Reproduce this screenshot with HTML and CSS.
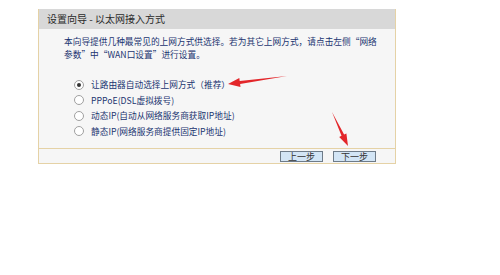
FILE: index.html
```
<html lang="zh-CN"><head>
    <meta charset="UTF-8">
    <title>设置向导 - 以太网接入方式</title>
    <link rel="stylesheet" href="styles.css">
</head>
<body>
    <div class="panel">
        <div class="panel-header">设置向导 - 以太网接入方式</div>
        <div class="panel-body">
            <p class="intro">本向导提供几种最常见的上网方式供选择。若为其它上网方式，请点击左侧“网络参数”中“WAN口设置”进行设置。</p>
            <div class="options">
                <div class="option"><span class="radio checked"></span>让路由器自动选择上网方式（推荐）</div>
                <div class="option"><span class="radio"></span>PPPoE(DSL虚拟拨号)</div>
                <div class="option"><span class="radio"></span>动态IP(自动从网络服务商获取IP地址)</div>
                <div class="option"><span class="radio"></span>静态IP(网络服务商提供固定IP地址)</div>
            </div>
        </div>
        <div class="panel-footer">
            <button class="step-btn">上一步</button>
            <button class="step-btn">下一步</button>
        </div>
    </div>

    <svg class="marks" width="500" height="275" viewBox="0 0 500 275">
        <path d="M287 76 L239.7 80.9 L239.3 77.9 L228 84 L240.5 86.9 L240.1 83.9 Z" fill="#e3262a"/>
        <path d="M332 112 L344.1 134.6 L346.4 133.5 L348 146 L339.2 136.9 L341.5 135.8 Z" fill="#e3262a"/>
    </svg>
</body></html>
```

FILE: styles.css
```
body {
    margin: 0;
    padding: 9px 0 0 38px;
    background-color: #fff;
    font-family: "Noto Sans CJK SC", "Liberation Sans", sans-serif;
}
.panel {
    width: 358px;
    box-sizing: border-box;
    border: 1px solid #e5d2a6;
    border-top: none;
}
.panel-header {
    height: 20px;
    line-height: 20px;
    padding-left: 8px;
    background-color: #d8d8d8;
    color: #2a2a2a;
    font-size: 10px;
}
.panel-body {
    height: 119px;
    box-sizing: border-box;
    padding: 6px 12px 0 25px;
    background-color: #f6f6f6;
    color: #1a3470;
    font-size: 8.7px;
}
.intro {
    margin: 0;
    line-height: 13px;
}
.options {
    margin-top: 16px;
}
.option {
    display: flex;
    align-items: center;
    line-height: 15.5px;
    padding-left: 10px;
}
.radio {
    width: 8px;
    height: 8px;
    margin-right: 7px;
    border: 1px solid #a0a0a0;
    border-radius: 50%;
    background-color: #fff;
    display: flex;
    justify-content: center;
    align-items: center;
}
.radio.checked::after {
    content: "";
    width: 4px;
    height: 4px;
    border-radius: 50%;
    background-color: #333;
}
.panel-footer {
    height: 15px;
    box-sizing: border-box;
    border-top: 1px solid #e5d2a6;
    background-color: #f6f6f6;
    display: flex;
    justify-content: flex-end;
    gap: 10px;
    padding: 2px 19px 0 0;
}
.step-btn {
    width: 43px;
    height: 11px;
    padding: 0;
    border: 1px solid #6e7b88;
    background-color: #d3e5f5;
    color: #333;
    font-family: inherit;
    font-size: 9px;
    line-height: 9px;
}
.marks {
    position: absolute;
    left: 0;
    top: 0;
    pointer-events: none;
}
```
